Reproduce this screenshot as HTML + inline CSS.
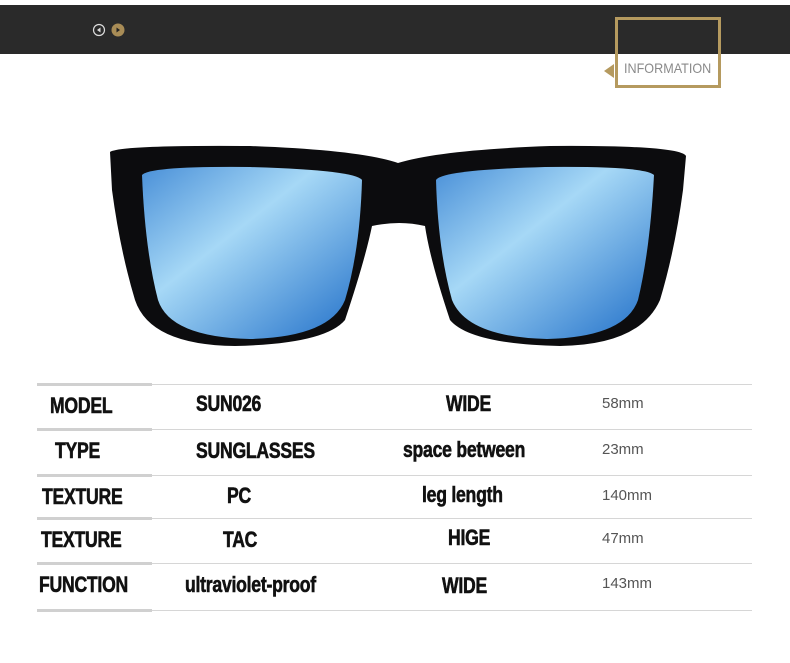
<!DOCTYPE html>
<html><head><meta charset="utf-8"><style>
body{margin:0;width:790px;height:663px;background:#fff;position:relative;overflow:hidden;font-family:"Liberation Sans",sans-serif}
.bar{position:absolute;left:0;top:5px;width:790px;height:49px;background:#2a2a2a}
.info{position:absolute;left:615px;top:17px;width:100px;height:65px;border:3px solid #b59a5f;background:transparent}
.infot{position:absolute;left:624px;top:60px;font-size:14px;color:#8a8a8a;transform:scaleX(0.9);transform-origin:left center}
.tri{position:absolute;left:604px;top:64px;width:0;height:0;border-top:7px solid transparent;border-bottom:7px solid transparent;border-right:10px solid #b59a5f}
.ln{position:absolute;left:37px;width:715px;height:1px;background:#d6d6d6}
.lns{position:absolute;left:37px;width:115px;height:3px;background:#d0d0d0}
.t{position:absolute;font-family:"Liberation Sans Narrow","Liberation Sans",sans-serif;font-weight:bold;font-size:22px;color:#111;transform:scaleX(0.8);transform-origin:left center;white-space:nowrap;letter-spacing:-0.3px;-webkit-text-stroke:0.6px #111}
.v{position:absolute;font-size:15px;color:#555;left:602px}
</style></head><body>
<div class="bar"></div>
<svg style="position:absolute;left:92px;top:23px" width="36" height="16">
<circle cx="7" cy="7" r="5.5" fill="none" stroke="#ddd" stroke-width="1.2"/><path d="M8.5 4.5L5 7l3.5 2.5z" fill="#ddd"/>
<circle cx="26" cy="7" r="6.5" fill="#a88c56"/><path d="M24.5 4.5L28 7l-3.5 2.5z" fill="#222"/></svg>
<div class="info"></div><div class="tri"></div><div class="infot">INFORMATION</div>
<svg style="position:absolute;left:0;top:0" width="790" height="360">
<defs><linearGradient id="g" x1="0" y1="0" x2="1" y2="1"><stop offset="0" stop-color="#4a90d8"/><stop offset="0.4" stop-color="#a6d8f6"/><stop offset="1" stop-color="#1f6ec8"/></linearGradient></defs>
<path d="M110 152 Q120 145 250 146 Q360 150 398 163 Q440 150 550 146 Q680 145 686 156 L683 190 Q675 250 660 300 Q640 345 560 346 Q470 344 450 320 Q430 260 425 226 Q400 220 372 226 Q365 260 345 320 Q325 344 235 346 Q150 345 135 300 Q120 250 112 190 Z" fill="#0c0c0e"/>
<path d="M142 175 Q150 166 250 167 Q355 170 362 180 Q360 250 345 300 Q330 337 250 339 Q170 337 158 300 Q145 250 142 175 Z" fill="url(#g)"/>
<path d="M436 180 Q442 170 545 167 Q645 166 654 175 Q650 250 638 300 Q625 337 547 339 Q467 337 452 300 Q438 250 436 180 Z" fill="url(#g)"/>
</svg>
<div class="ln" style="top:384px"></div><div class="lns" style="top:383px"></div>
<div class="ln" style="top:429px"></div><div class="lns" style="top:428px"></div>
<div class="ln" style="top:475px"></div><div class="lns" style="top:474px"></div>
<div class="ln" style="top:518px"></div><div class="lns" style="top:517px"></div>
<div class="ln" style="top:563px"></div><div class="lns" style="top:562px"></div>
<div class="ln" style="top:610px"></div><div class="lns" style="top:609px"></div>
<div class="t" style="left:50px;top:393px">MODEL</div><div class="t" style="left:196px;top:391px">SUN026</div><div class="t" style="left:446px;top:391px">WIDE</div><div class="v" style="top:395px">58mm</div>
<div class="t" style="left:55px;top:438px">TYPE</div><div class="t" style="left:196px;top:438px">SUNGLASSES</div><div class="t" style="left:403px;top:437px">space between</div><div class="v" style="top:441px">23mm</div>
<div class="t" style="left:42px;top:484px">TEXTURE</div><div class="t" style="left:227px;top:483px">PC</div><div class="t" style="left:422px;top:482px">leg length</div><div class="v" style="top:487px">140mm</div>
<div class="t" style="left:41px;top:527px">TEXTURE</div><div class="t" style="left:223px;top:527px">TAC</div><div class="t" style="left:448px;top:525px">HIGE</div><div class="v" style="top:530px">47mm</div>
<div class="t" style="left:39px;top:572px">FUNCTION</div><div class="t" style="left:185px;top:572px">ultraviolet-proof</div><div class="t" style="left:442px;top:573px">WIDE</div><div class="v" style="top:575px">143mm</div>
</body></html>
